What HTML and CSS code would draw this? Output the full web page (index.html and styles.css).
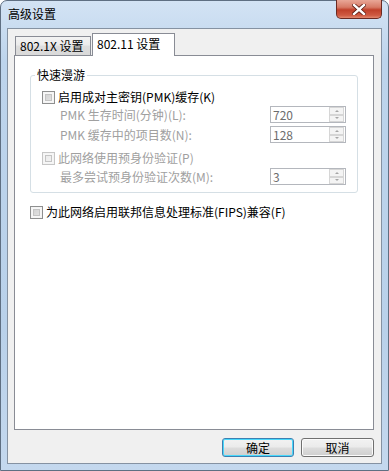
FILE: index.html
```html
<!DOCTYPE html>
<html lang="zh-CN">

<head>
  <meta charset="UTF-8">
  <meta name="viewport" content="width=device-width, initial-scale=1.0">
  <title>高级设置</title>
  <link rel="stylesheet" href="styles.css">
</head>

<body>
  <div class="window">
    <div class="titlebar">
      <span class="title">高级设置</span>
      <div class="close">
        <svg width="14" height="11" viewBox="0 0 14 11">
          <path d="M2 1 L12 10 M12 1 L2 10" stroke="#5a1a10" stroke-width="4" stroke-linecap="square" />
          <path d="M2 1 L12 10 M12 1 L2 10" stroke="#ffffff" stroke-width="2.4" stroke-linecap="square" />
        </svg>
      </div>
    </div>

    <div class="client">
      <div class="tabs">
        <div class="tab">802.1X 设置</div>
        <div class="tab active">802.11 设置</div>
      </div>

      <div class="panel">
        <div class="group">
          <span class="legend">快速漫游</span>

          <div class="row check-row">
            <span class="check"></span>
            <span>启用成对主密钥(PMK)缓存(K)</span>
          </div>
          <div class="row field-row first">
            <span class="label disabled">PMK 生存时间(分钟)(L):</span>
            <div class="spin">
              <span class="value">720</span>
              <span class="arrows"><i class="up"></i><i class="down"></i></span>
            </div>
          </div>
          <div class="row field-row second">
            <span class="label disabled">PMK 缓存中的项目数(N):</span>
            <div class="spin">
              <span class="value">128</span>
              <span class="arrows"><i class="up"></i><i class="down"></i></span>
            </div>
          </div>
          <div class="row check-row pre">
            <span class="check off"></span>
            <span class="disabled">此网络使用预身份验证(P)</span>
          </div>
          <div class="row field-row third">
            <span class="label disabled">最多尝试预身份验证次数(M):</span>
            <div class="spin">
              <span class="value">3</span>
              <span class="arrows"><i class="up"></i><i class="down"></i></span>
            </div>
          </div>
        </div>

        <div class="row check-row fips">
          <span class="check"></span>
          <span>为此网络启用联邦信息处理标准(FIPS)兼容(F)</span>
        </div>
      </div>

      <div class="buttons">
        <button class="btn default">确定</button>
        <button class="btn">取消</button>
      </div>
    </div>
  </div>
</body>

</html>
```

FILE: styles.css
```css
* {
  margin: 0;
  padding: 0;
  box-sizing: border-box;
}

body {
  background-color: #ffffff;
  font-family: "Noto Sans CJK SC", "DejaVu Sans", sans-serif;
  font-size: 12px;
  color: #000000;
}

.window {
  width: 389px;
  height: 471px;
  border: 1px solid #5f6f82;
  border-radius: 7px 7px 0 0;
  background: linear-gradient(#d3e3f4, #bdd4ec 60px, #b9d1ea 70%, #c4d8ee);
  padding: 0 6px 6px 6px;
  display: flex;
  flex-direction: column;
}

.titlebar {
  height: 27px;
  display: flex;
  justify-content: space-between;
  align-items: flex-start;
}

.title {
  margin-top: 5px;
  padding-left: 1px;
  line-height: 16px;
  color: #000000;
}

.close {
  width: 46px;
  height: 19px;
  margin-top: -1px;
  border: 1px solid #6b2a22;
  border-top: none;
  border-radius: 0 0 5px 5px;
  background: linear-gradient(#e9a797, #d77a66 40%, #c0402a 55%, #cf5a42 85%, #e2886f);
  display: flex;
  align-items: center;
  justify-content: center;
}

.client {
  flex: 1;
  background-color: #f0f0f0;
  border: 1px solid #8592a2;
  padding: 4px 7px 6px 6px;
  display: flex;
  flex-direction: column;
}

.tabs {
  display: flex;
  align-items: flex-end;
  padding-left: 1px;
  height: 22px;
}

.tab {
  width: 76px;
  height: 19px;
  border: 1px solid #898c95;
  border-bottom: none;
  background: linear-gradient(#f3f3f3, #ebebeb 45%, #dedede 50%, #d9d9d9);
  padding-left: 4px;
  line-height: 18px;
}

.tab.active {
  width: 83px;
  height: 23px;
  margin-left: 1px;
  margin-bottom: -1px;
  background: #ffffff;
  position: relative;
  z-index: 1;
  line-height: 20px;
}

.panel {
  flex: 1;
  background-color: #ffffff;
  border: 1px solid #898c95;
  padding: 19px 15px 0 15px;
}

.group {
  position: relative;
  border: 1px solid #d5dfe5;
  border-radius: 3px;
  padding: 13px 11px 7px 11px;
}

.legend {
  position: absolute;
  top: -9px;
  left: 4px;
  padding: 0 2px;
  background: #ffffff;
  line-height: 16px;
}

.row {
  display: flex;
  align-items: center;
  line-height: 16px;
}

.check-row {
  height: 16px;
  gap: 3px;
}

.check-row.pre {
  margin-top: 7px;
}

.check-row.fips {
  margin-top: 11px;
}

.check {
  width: 13px;
  height: 13px;
  border: 1px solid #8e8f8f;
  background: #f4f4f4;
  box-shadow: inset 0 0 0 2px #f4f4f4, inset 0 0 0 3px #c4c4c4;
  background: linear-gradient(135deg, #cbcbcb, #e9e9e9);
  position: relative;
}

.check::before {
  content: "";
  position: absolute;
  inset: 1px;
  border: 1px solid #f7f7f7;
}

.check.off {
  border-color: #c6c6c6;
  background: linear-gradient(135deg, #e8e8e8, #f4f4f4);
}

.disabled {
  color: #a0a0a0;
}

.field-row {
  height: 17px;
  padding-left: 18px;
}

.field-row.first {
  margin-top: 1px;
}

.field-row.second {
  margin-top: 3px;
}

.field-row.third {
  margin-top: 2px;
}

.spin {
  margin-left: auto;
  width: 76px;
  height: 17px;
  border: 1px solid #b4b7bd;
  background: #ffffff;
  display: flex;
  align-items: center;
  justify-content: space-between;
  padding: 0 1px 0 2px;
}

.value {
  color: #6d6d6d;
  line-height: 15px;
}

.arrows {
  width: 15px;
  height: 15px;
  display: flex;
  flex-direction: column;
}

.arrows i {
  flex: 1;
  border: 1px solid #d6d6d6;
  background: #f4f4f4;
  display: flex;
  align-items: center;
  justify-content: center;
}

.arrows i::after {
  content: "";
  border-left: 2px solid transparent;
  border-right: 2px solid transparent;
}

.arrows .up::after {
  border-bottom: 2px solid #a6a6a6;
}

.arrows .down::after {
  border-top: 2px solid #a6a6a6;
}

.buttons {
  display: flex;
  justify-content: flex-end;
  gap: 7px;
  margin-top: 8px;
}

.btn {
  width: 73px;
  height: 19px;
  border: 1px solid #707070;
  border-radius: 3px;
  background: linear-gradient(#f2f2f2, #ebebeb 48%, #dddddd 52%, #cfcfcf);
  box-shadow: inset 0 0 0 1px #fbfbfb;
  font-family: "Noto Sans CJK SC", "DejaVu Sans", sans-serif;
  font-size: 12px;
  line-height: 16px;
  color: #000000;
}

.btn.default {
  border-color: #3c7fb1;
  box-shadow: inset 0 0 0 1px #48d8fb;
  width: 72px;
}
```
